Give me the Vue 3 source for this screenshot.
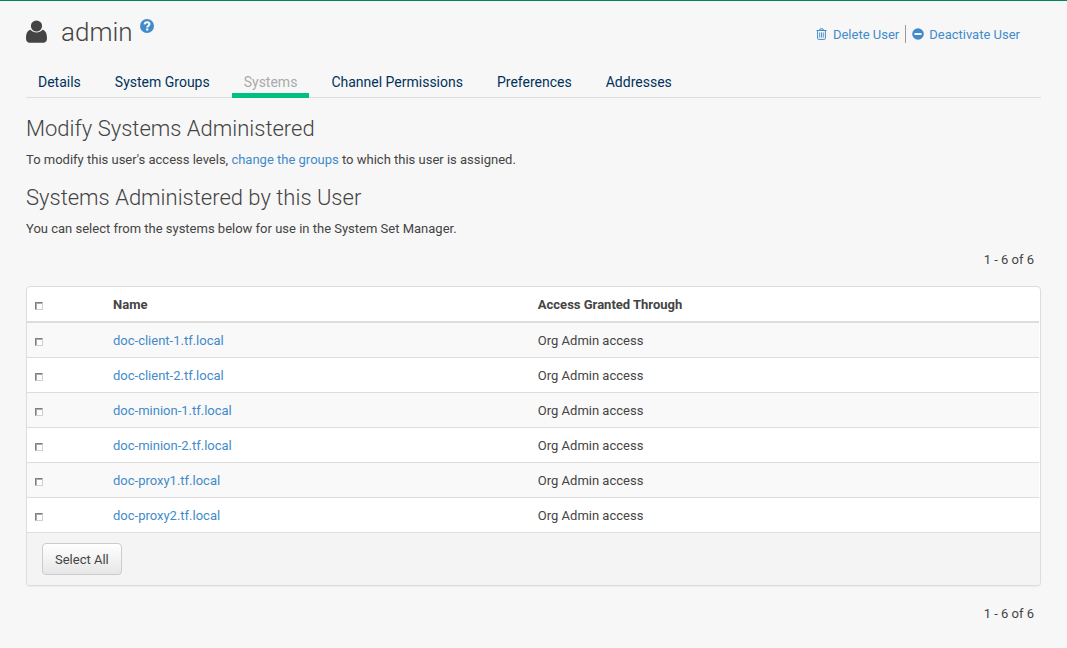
<script setup>
import { computed, ref } from 'vue'

const tabs = ['Details', 'System Groups', 'Systems', 'Channel Permissions', 'Preferences', 'Addresses']
const activeTab = 'Systems'

const systems = [
  'doc-client-1.tf.local',
  'doc-client-2.tf.local',
  'doc-minion-1.tf.local',
  'doc-minion-2.tf.local',
  'doc-proxy1.tf.local',
  'doc-proxy2.tf.local',
]

const selected = ref([])
const allSelected = computed(() => selected.value.length === systems.length)

function selectAll() {
  selected.value = [...systems]
}

function toggleAll() {
  selected.value = allSelected.value ? [] : [...systems]
}
</script>

<template>
  <main class="page">
    <header class="heading">
      <h1>
        <svg class="user-icon" viewBox="0 0 21 23" aria-hidden="true">
          <circle cx="10.5" cy="6" r="5.6" />
          <path d="M4.6 9.8C1.4 10.4 0 13.4 0 18.2C0 21 1.4 22.8 3.8 22.8H17.2C19.6 22.8 21 21 21 18.2C21 13.4 19.6 10.4 16.4 9.8C14.9 11.6 12.9 12.5 10.5 12.5C8.1 12.5 6.1 11.6 4.6 9.8Z" />
        </svg>
        <span>admin</span>
        <a class="help" href="#" aria-label="Help">
          <svg viewBox="0 0 14 14" aria-hidden="true">
            <circle cx="7" cy="7" r="7" fill="#428bca" />
            <path d="M4.6 5.3C4.8 3.8 5.7 3.2 7.1 3.2C8.5 3.2 9.5 4 9.5 5.1C9.5 6.7 7.2 6.7 7.2 8.6" fill="none" stroke="#fff" stroke-width="2" />
            <path d="M6.1 9.5H8.3V11.5H6.1Z" fill="#fff" />
          </svg>
        </a>
      </h1>
      <nav class="actions" aria-label="User actions">
        <a href="#">
          <svg class="trash" viewBox="0 0 11 12" fill="none" stroke="currentColor" aria-hidden="true">
            <path d="M0.5 2.5H10.5M3.5 2.5L4 0.9H7L7.5 2.5M1.6 2.5V10.3Q1.6 11.4 2.6 11.4H8.4Q9.4 11.4 9.4 10.3V2.5" />
            <path d="M3.7 4.4V9.6M5.5 4.4V9.6M7.3 4.4V9.6" stroke-width="0.9" />
          </svg>
          <span>Delete User</span>
        </a>
        <a href="#">
          <svg class="minus" viewBox="0 0 12 12" aria-hidden="true">
            <circle cx="6" cy="6" r="5.8" fill="currentColor" />
            <path d="M2.5 5H9.5V7H2.5Z" fill="#f7f7f7" />
          </svg>
          <span>Deactivate User</span>
        </a>
      </nav>
    </header>

    <nav class="tabs" aria-label="User sections">
      <a v-for="tab in tabs" :key="tab" href="#" :class="{ active: tab === activeTab }">{{ tab }}</a>
    </nav>

    <h2>Modify Systems Administered</h2>
    <p>To modify this user's access levels, <a href="#">change the groups</a> to which this user is assigned.</p>
    <h2>Systems Administered by this User</h2>
    <p>You can select from the systems below for use in the System Set Manager.</p>

    <div class="count">1 - 6 of 6</div>
    <section class="panel">
      <table>
        <thead>
          <tr>
            <th class="check"><input type="checkbox" aria-label="Select all systems" :checked="allSelected" @change="toggleAll" /></th>
            <th class="name">Name</th>
            <th>Access Granted Through</th>
          </tr>
        </thead>
        <tbody>
          <tr v-for="system in systems" :key="system">
            <td><input v-model="selected" type="checkbox" :value="system" :aria-label="'Select ' + system" /></td>
            <td><a href="#">{{ system }}</a></td>
            <td>Org Admin access</td>
          </tr>
        </tbody>
      </table>
      <div class="footer">
        <button type="button" @click="selectAll">Select All</button>
      </div>
    </section>
    <div class="count">1 - 6 of 6</div>
  </main>
</template>

<style>
body {
  background: #f7f7f7;
}
</style>

<style scoped>
.page {
  box-sizing: border-box;
  padding: 12px 26px;
  border-top: 1px solid #00865a;
  background: #f7f7f7;
  color: #444;
  font: 13px/20px Roboto, "Liberation Sans", sans-serif;
}
a {
  color: #428bca;
  text-decoration: none;
}
.heading {
  display: flex;
  justify-content: space-between;
  align-items: center;
  padding-right: 21px;
}
h1 {
  display: flex;
  align-items: center;
  margin: 0;
  font-size: 26px;
  font-weight: 300;
  line-height: 38px;
}
.user-icon {
  width: 21px;
  height: 23px;
  margin: 0 14px 2px 0;
  fill: #444;
}
.help {
  align-self: flex-start;
  display: flex;
  margin: 6px 0 0 7px;
}
.help svg {
  width: 14px;
  height: 14px;
}
.actions {
  display: flex;
  padding-top: 4px;
}
.actions a {
  display: flex;
  align-items: center;
  line-height: 18px;
}
.actions span {
  padding-top: 1px;
  line-height: 17px;
}
.actions a + a {
  margin-left: 6px;
  padding-left: 6px;
  border-left: 1px solid #999;
}
.trash {
  width: 11px;
  height: 12px;
  margin-right: 6px;
}
.minus {
  width: 12px;
  height: 12px;
  margin-right: 5px;
}
.tabs {
  display: flex;
  gap: 10px;
  margin-top: 16px;
  border-bottom: 1px solid #ddd;
}
.tabs a {
  margin-bottom: -1px;
  padding: 5px 12px 1px;
  border-bottom: 5px solid transparent;
  color: #00325b;
  font-size: 14px;
}
.tabs .active {
  border-color: #00c081;
  color: #aaa;
}
h2 {
  margin: 18px 0 8px;
  font-size: 22px;
  font-weight: 300;
  line-height: 26px;
}
p {
  margin: 0;
}
p + h2 {
  margin-top: 15px;
}
.count {
  padding: 11px 7px 16px;
  text-align: right;
}
.panel {
  overflow: hidden;
  border: 1px solid #ddd;
  border-radius: 4px;
  background: #fff;
  box-shadow: 0 1px 1px rgba(0, 0, 0, 0.05);
}
table {
  width: calc(100% - 1px);
  table-layout: fixed;
  border-collapse: separate;
  border-spacing: 0;
}
th,
td {
  padding: 8px 8px 6px;
  border-bottom: 1px solid #ddd;
  text-align: left;
}
th {
  border-bottom-width: 2px;
  font-weight: 700;
}
tbody tr:last-child td {
  border-bottom: 0;
}
.check {
  width: 62px;
}
.name {
  width: 40.4%;
}
tbody tr:nth-child(odd) {
  background: #f9f9f9;
}
input {
  appearance: none;
  display: block;
  box-sizing: border-box;
  width: 8px;
  height: 8px;
  margin: 2px 0 0;
  border: 1px solid #d4d0c8;
  border-top-color: #808080;
  border-left-color: #808080;
  background: #fff;
  box-shadow: inset 1px 1px 0 #aaa;
}
input:checked {
  background: #428bca;
}
.footer {
  padding: 10px 15px;
  border-top: 1px solid #ddd;
  background: #f4f4f4;
}
button {
  display: block;
  height: 32px;
  padding: 1px 12px 0;
  border: 1px solid #ccc;
  border-radius: 4px;
  background: linear-gradient(#fff, #e6e6e6);
  color: #444;
  font: 13px/20px Roboto, "Liberation Sans", sans-serif;
}
.panel + .count {
  padding-top: 18px;
}
</style>
